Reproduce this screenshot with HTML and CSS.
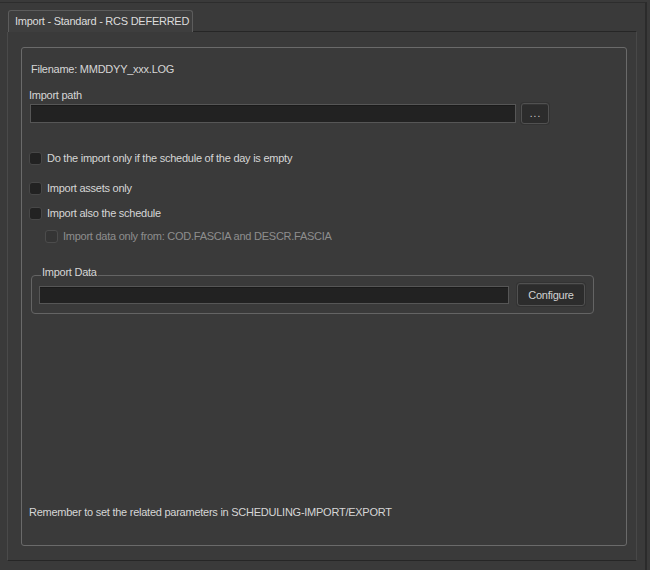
FILE: index.html
```html
<!DOCTYPE html>
<html>
<head>
<meta charset="utf-8">
<link rel="stylesheet" href="styles.css">
</head>
<body>
<div class="window">
  <div class="tabs">
    <div class="tab">Import - Standard - RCS DEFERRED</div>
  </div>
  <div class="pane">
    <div class="group">
      <div class="filename">Filename: MMDDYY_xxx.LOG</div>
      <div class="label">Import path</div>
      <div class="path-row">
        <div class="input path"></div>
        <div class="btn dots">...</div>
      </div>
      <div class="check c1"><span class="box"></span><span>Do the import only if the schedule of the day is empty</span></div>
      <div class="check c2"><span class="box"></span><span>Import assets only</span></div>
      <div class="check c3"><span class="box"></span><span>Import also the schedule</span></div>
      <div class="check c4 disabled"><span class="box"></span><span>Import data only from: COD.FASCIA and DESCR.FASCIA</span></div>
      <fieldset class="import-data">
        <legend>Import Data</legend>
        <div class="data-row">
          <div class="input data"></div>
          <div class="btn configure">Configure</div>
        </div>
      </fieldset>
      <div class="footer">Remember to set the related parameters in SCHEDULING-IMPORT/EXPORT</div>
    </div>
  </div>
</div>
</body>
</html>
```
FILE: styles.css
```css
html, body {
  margin: 0;
  padding: 0;
  background: #3a3a3a;
  width: 650px;
  height: 570px;
  overflow: hidden;
}
body {
  font-family: "Liberation Sans", Arial, sans-serif;
  font-size: 11px;
  letter-spacing: -0.25px;
  color: #d6d6d6;
}
.window {
  box-sizing: border-box;
  width: 647px;
  height: 568px;
  margin-top: 2px;
  border-top: 1px solid #2d2d2d;
  border-right: 2px solid #2b2b2b;
  padding: 7px 0 0 7px;
  display: flex;
  flex-direction: column;
}
.tabs {
  display: flex;
  height: 21px;
  padding-left: 1px;
}
.tab {
  box-sizing: border-box;
  width: 185px;
  height: 22px;
  border: 1px solid #5c5c5c;
  border-bottom: none;
  border-radius: 3px 3px 0 0;
  background: #3e3e3e;
  padding: 3px 0 0 6px;
  line-height: 14px;
  color: #dcdcdc;
  white-space: nowrap;
  position: relative;
  z-index: 1;
}
.pane {
  box-sizing: border-box;
  width: 630px;
  height: 530px;
  border-top: 1px solid #262626;
  border-bottom: 1px solid #262626;
  border-left: 1px solid #4a4a4a;
  border-right: 1px solid #484848;
  padding: 15px 9px 14px 13px;
  display: flex;
  flex-direction: column;
}
.group {
  flex: 1;
  border: 1px solid #6a6a6a;
  border-radius: 3px;
  padding: 14px 7px 26px 7px;
  display: flex;
  flex-direction: column;
  line-height: 14px;
}
.filename {
  margin-left: 2px;
}
.label {
  margin-top: 12px;
}
.path-row {
  margin-top: 1px;
  display: flex;
  align-items: center;
  gap: 5px;
  height: 21px;
}
.input {
  box-sizing: border-box;
  background: #222222;
  border: 1px solid #565656;
  box-shadow: inset 0 1px 0 #1a1a1a;
}
.input.path {
  width: 486px;
  height: 19px;
  margin-left: 1px;
}
.btn {
  box-sizing: border-box;
  background: #2c2c2c;
  border: 1px solid #515151;
  border-radius: 3px;
  box-shadow: 0 0 0 1px #333333, inset 0 1px 0 #353535;
  display: flex;
  align-items: center;
  justify-content: center;
  color: #d2d2d2;
}
.btn.dots {
  width: 28px;
  height: 21px;
  font-size: 10px;
  letter-spacing: 1px;
  line-height: 12px;
  padding: 0 0 0 1px;
}
.check {
  display: flex;
  align-items: center;
  gap: 5px;
  height: 14px;
}
.check .box {
  box-sizing: border-box;
  width: 13px;
  height: 13px;
  background: #222222;
  border: 1px solid #474747;
  border-radius: 3px;
}
.c1 { margin-top: 27px; }
.c2 { margin-top: 16px; }
.c3 { margin-top: 11px; }
.c4 { margin-top: 9px; margin-left: 16px; }
.check.disabled { color: #8e8e8e; }
.check.disabled .box {
  background: #353535;
  border-color: #4c4c4c;
}
.import-data {
  box-sizing: border-box;
  width: 563px;
  margin: 22px 0 0 2px;
  padding: 0 8px 7px 7px;
  border: 1px solid #646464;
  border-radius: 4px;
  min-width: 0;
}
.import-data legend {
  margin-left: 2px;
  padding: 0 1px 6px 1px;
  line-height: 14px;
}
.data-row {
  margin-top: -2px;
  display: flex;
  align-items: center;
  gap: 8px;
  height: 23px;
}
.input.data {
  flex: 1;
  height: 18px;
}
.btn.configure {
  width: 68px;
  height: 23px;
}
.footer {
  margin-top: auto;
}
```
